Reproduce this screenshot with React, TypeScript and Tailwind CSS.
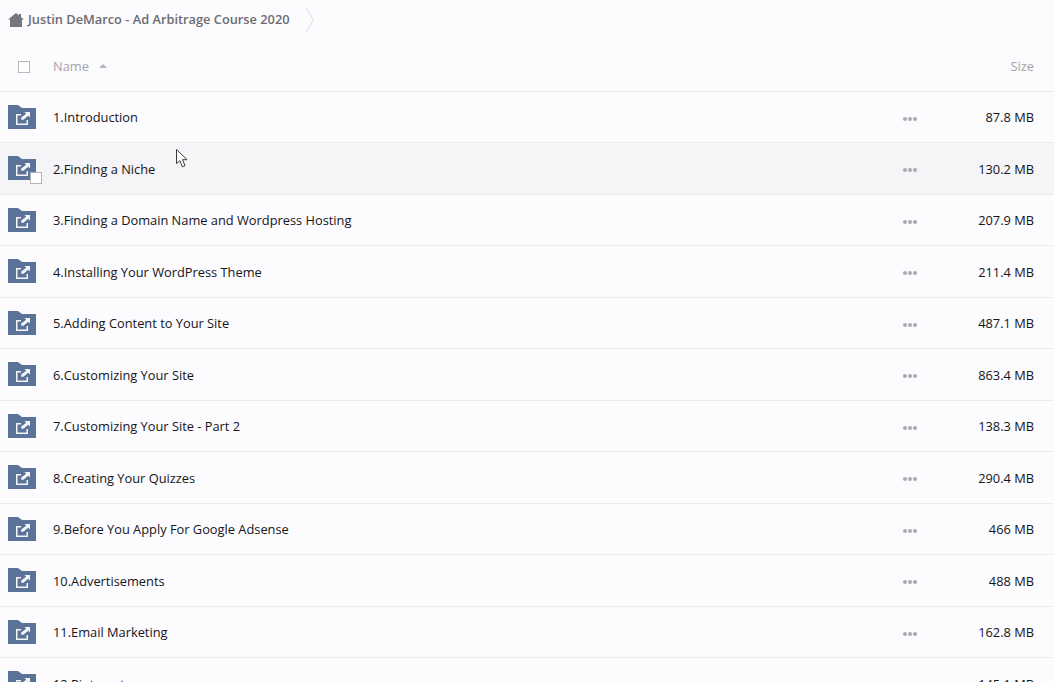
const rows = [
  { name: '1.Introduction', size: '87.8 MB' },
  { name: '2.Finding a Niche', size: '130.2 MB' },
  { name: '3.Finding a Domain Name and Wordpress Hosting', size: '207.9 MB' },
  { name: '4.Installing Your WordPress Theme', size: '211.4 MB' },
  { name: '5.Adding Content to Your Site', size: '487.1 MB' },
  { name: '6.Customizing Your Site', size: '863.4 MB' },
  { name: '7.Customizing Your Site - Part 2', size: '138.3 MB' },
  { name: '8.Creating Your Quizzes', size: '290.4 MB' },
  { name: '9.Before You Apply For Google Adsense', size: '466 MB' },
  { name: '10.Advertisements', size: '488 MB' },
  { name: '11.Email Marketing', size: '162.8 MB' },
  { name: '12.Pinterest', size: '145.1 MB' },
]

function FolderIcon() {
  return (
    <svg width="28" height="24" viewBox="0 0 28 24" className="shrink-0">
      <path d="M0 0H10L14 3H28V24H0Z" fill="#5b7299" />
      <path d="M8 9H13V10.5H9.5V18.5H18.5V15H20V20H8Z" fill="#f4f5f8" />
      <path d="M16.5 7H22V12.5L20.2 10.7L15.5 14.8H13.2V12.5L18.2 8.7Z" fill="#f4f5f8" />
    </svg>
  )
}

function Dots() {
  return (
    <div className="flex gap-[1px]">
      <span className="w-1 h-1 rounded-full bg-[#aaa9ae]" />
      <span className="w-1 h-1 rounded-full bg-[#aaa9ae]" />
      <span className="w-1 h-1 rounded-full bg-[#aaa9ae]" />
    </div>
  )
}

export default function App() {
  return (
    <div className="relative w-[1054px] h-[682px] overflow-hidden bg-[#fcfbfe] font-['Open_Sans',sans-serif] text-[12.83px] text-[#15151a]">
      <div className="h-[39px] flex items-center pl-2">
        <svg width="16" height="14" viewBox="0 0 16 14" className="shrink-0">
          <path d="M8 0L11 2.4V1H13V4L16 6.6H14V14H2V6.6H0Z" fill="#77767c" />
        </svg>
        <span className="ml-1 font-semibold text-[12.8px] text-[#6c6b72]">Justin DeMarco - Ad Arbitrage Course 2020</span>
        <svg width="10" height="26" viewBox="0 0 10 26" className="ml-[15px]">
          <path d="M1 1L8.5 13L1 25" fill="none" stroke="#dddce0" />
        </svg>
      </div>

      <div className="h-[52.5px] pt-[3px] border-b border-[#e8e7ea] flex items-center">
        <div className="w-[53px] pl-[18px] pt-[1px]">
          <div className="w-3 h-3 border border-[#b9b8bd] bg-white" />
        </div>
        <span className="text-[#a3a2a8]">Name</span>
        <span className="ml-[10px] w-0 h-0 border-x-[4px] border-x-transparent border-b-[4px] border-b-[#b5b4b9]" />
        <span className="ml-auto pr-5 text-[#a3a2a8]">Size</span>
      </div>

      {rows.map((row, i) => (
        <div
          key={row.name}
          className={`h-[51.5px] pt-[2px] border-b border-[#ebeaed] flex items-center ${i === 1 ? 'bg-[#f5f4f6]' : ''}`}
        >
          <div className="relative w-[53px] pl-2 pb-[2px] shrink-0">
            <FolderIcon />
            {i === 1 && (
              <div className="absolute left-[30px] top-[16px] w-3 h-3 border border-[#b4b3b8] bg-white" />
            )}
          </div>
          <span className="flex-1">{row.name}</span>
          <div className="w-[50px] shrink-0 pt-[2px]">
            <Dots />
          </div>
          <span className="w-[101px] shrink-0 pr-5 text-right whitespace-nowrap">{row.size}</span>
        </div>
      ))}

      <svg width="14" height="20" viewBox="0 0 14 20" className="absolute left-[176px] top-[149px]">
        <path d="M0.5 0.5V14.5L3.8 11.6L6.4 17.8L9 16.7L6.5 10.7H11Z" fill="#fff" stroke="#3a3a3e" />
      </svg>
    </div>
  )
}
